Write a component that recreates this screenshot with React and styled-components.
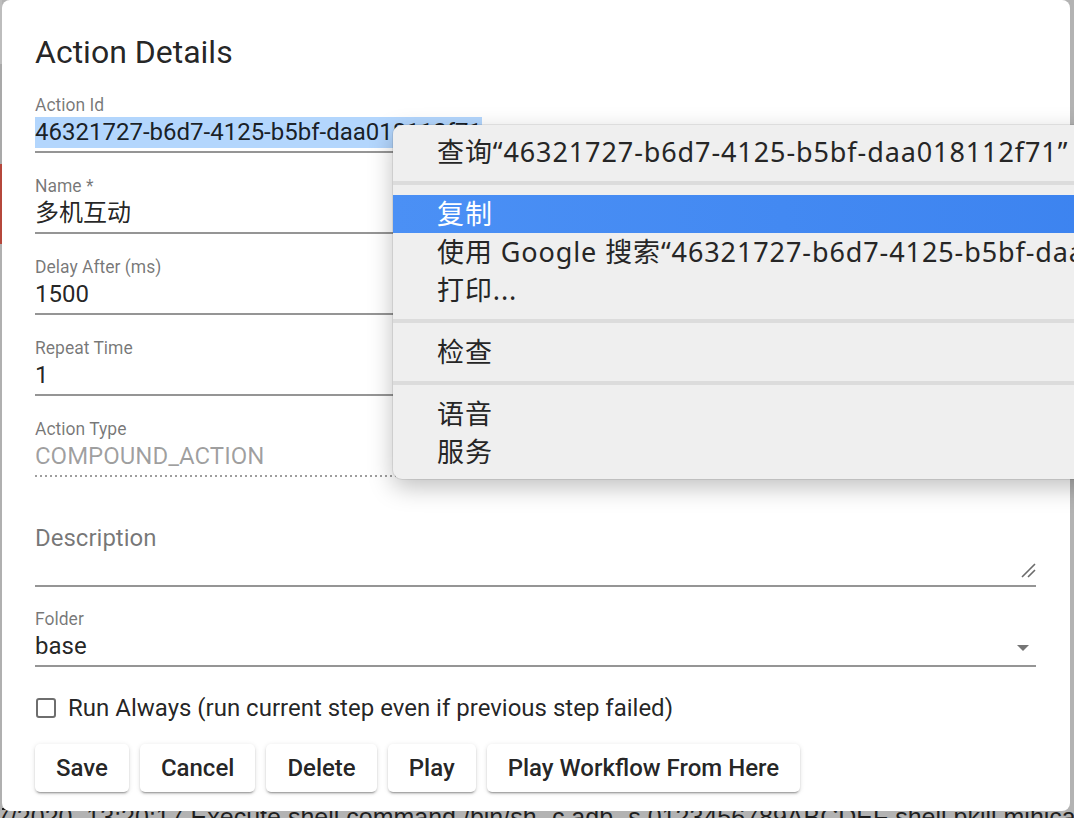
import React from "react";
import styled, { createGlobalStyle } from "styled-components";

const GlobalStyle = createGlobalStyle`
  html, body {
    margin: 0;
    padding: 0;
    overflow: hidden;
    background: #b3b3b3;
  }
  * { box-sizing: border-box; }
`;

const FONT = `"Roboto", "Noto Sans CJK SC", sans-serif`;

const fields = [
  { label: "Action Id", value: "46321727-b6d7-4125-b5bf-daa018112f71", selected: true },
  { label: "Name *", value: "多机互动" },
  { label: "Delay After (ms)", value: "1500" },
  { label: "Repeat Time", value: "1" },
  { label: "Action Type", value: "COMPOUND_ACTION", disabled: true },
];

const buttons = ["Save", "Cancel", "Delete", "Play", "Play Workflow From Here"];

const menuGroups = [
  [{ text: "查询“46321727-b6d7-4125-b5bf-daa018112f71”" }],
  [
    { text: "复制", active: true },
    { text: "使用 Google 搜索“46321727-b6d7-4125-b5bf-daa018112f71”" },
    { text: "打印..." },
  ],
  [{ text: "检查" }],
  [{ text: "语音" }, { text: "服务" }],
];

const App = () => {
  return (
    <Screen>
      <GlobalStyle />
      <TopRow>
        <LeftEdge>
          <EdgeBlock $h={64} $color="#bdbdbd" />
          <EdgeBlock $h={100} $color="#a9a9a9" />
          <EdgeBlock $h={80} $color="#b5473b" />
          <EdgeBlock $h={567} $color="#b0b0b0" />
        </LeftEdge>

        <Dialog>
          <Title>Action Details</Title>

          {fields.map((f) => (
            <Field key={f.label} $disabled={f.disabled}>
              <Label>{f.label}</Label>
              <Value $disabled={f.disabled}>
                {f.selected ? <Selected>{f.value}</Selected> : f.value}
              </Value>
            </Field>
          ))}

          <TextAreaField>
            <Placeholder>Description</Placeholder>
            <ResizeHandle width="16" height="16" viewBox="0 0 16 16">
              <path d="M2 15 L15 2 M8 15 L15 8" stroke="#6b6b6b" strokeWidth="1.6" fill="none" />
            </ResizeHandle>
          </TextAreaField>

          <Field>
            <Label>Folder</Label>
            <SelectValue>
              base
              <Arrow />
            </SelectValue>
          </Field>

          <CheckRow>
            <CheckBox />
            <CheckLabel>Run Always (run current step even if previous step failed)</CheckLabel>
          </CheckRow>

          <ButtonRow>
            {buttons.map((b) => (
              <Button key={b}>{b}</Button>
            ))}
          </ButtonRow>

          <ContextMenu>
            {menuGroups.map((group, gi) => (
              <React.Fragment key={gi}>
                {gi > 0 && <Separator />}
                {group.map((item) => (
                  <MenuItem key={item.text} $active={item.active}>
                    {item.text}
                  </MenuItem>
                ))}
              </React.Fragment>
            ))}
          </ContextMenu>
        </Dialog>
      </TopRow>
      <LogLine>7/2020, 13:20:17 Execute shell command /bin/sh -c adb -s 0123456789ABCDEF shell pkill mihican</LogLine>
    </Screen>
  );
};

const Screen = styled.div`
  width: 1074px;
  height: 818px;
  overflow: hidden;
  background: #b3b3b3;
  display: flex;
  flex-direction: column;
  font-family: ${FONT};
`;

const TopRow = styled.div`
  position: relative;
  z-index: 1;
  display: flex;
  height: 811px;
  flex-shrink: 0;
`;

const LeftEdge = styled.div`
  width: 2px;
  display: flex;
  flex-direction: column;
`;

const EdgeBlock = styled.div`
  height: ${(p) => p.$h}px;
  background: ${(p) => p.$color};
`;

const Dialog = styled.div`
  position: relative;
  width: 1068px;
  height: 811px;
  background: #ffffff;
  border-radius: 8px;
  padding: 34px 34px 0 33px;
  display: flex;
  flex-direction: column;
`;

const Title = styled.div`
  font-size: 32px;
  line-height: 36px;
  font-weight: 400;
  color: rgba(0, 0, 0, 0.87);
  margin-bottom: 25px;
`;

const Field = styled.div`
  display: flex;
  flex-direction: column;
  padding-bottom: 4px;
  margin-bottom: 23px;
  ${(p) =>
    p.$disabled
      ? `background: linear-gradient(to right, #9e9e9e 40%, transparent 0) repeat-x left bottom / 5px 2px;
         padding-bottom: 6px;`
      : `border-bottom: 2px solid #959595;`}
`;

const Label = styled.div`
  font-size: 17.5px;
  line-height: 20px;
  color: rgba(0, 0, 0, 0.54);
  margin-bottom: 2px;
`;

const Value = styled.div`
  font-size: 24px;
  line-height: 30px;
  color: ${(p) => (p.$disabled ? "rgba(0,0,0,0.38)" : "rgba(0,0,0,0.87)")};
  white-space: nowrap;
`;

const Selected = styled.span`
  background: #b3d6fd;
  padding: 1px 0 2px;
`;

const TextAreaField = styled.div`
  position: relative;
  height: 87px;
  padding-top: 23px;
  border-bottom: 2px solid #959595;
  margin-bottom: 22px;
`;

const Placeholder = styled.div`
  font-size: 24px;
  line-height: 30px;
  color: rgba(0, 0, 0, 0.54);
`;

const ResizeHandle = styled.svg`
  position: absolute;
  right: 0;
  bottom: 7px;
`;

const SelectValue = styled.div`
  display: flex;
  align-items: center;
  justify-content: space-between;
  font-size: 24px;
  line-height: 30px;
  color: rgba(0, 0, 0, 0.87);
  padding-right: 7px;
`;

const Arrow = styled.span`
  width: 0;
  height: 0;
  border-left: 6px solid transparent;
  border-right: 6px solid transparent;
  border-top: 6px solid #757575;
  margin-top: 3px;
`;

const CheckRow = styled.div`
  display: flex;
  align-items: center;
  height: 32px;
  margin-top: 2px;
  margin-bottom: 20px;
`;

const CheckBox = styled.span`
  width: 20px;
  height: 20px;
  border: 2px solid #6e6e6e;
  border-radius: 3px;
  margin-right: 12px;
  margin-left: 1px;
`;

const CheckLabel = styled.span`
  font-size: 24px;
  color: rgba(0, 0, 0, 0.87);
`;

const ButtonRow = styled.div`
  display: flex;
  gap: 11px;
`;

const Button = styled.button`
  height: 48px;
  padding: 0 21px;
  border: none;
  border-radius: 5px;
  background: #ffffff;
  font-family: ${FONT};
  font-size: 24px;
  font-weight: 500;
  color: rgba(0, 0, 0, 0.87);
  box-shadow: 0 3px 1px -2px rgba(0, 0, 0, 0.2), 0 2px 2px 0 rgba(0, 0, 0, 0.14),
    0 1px 5px 0 rgba(0, 0, 0, 0.12);
`;

const ContextMenu = styled.div`
  position: absolute;
  left: 391px;
  top: 125px;
  width: 780px;
  padding: 8px 0;
  background: #efefef;
  border-radius: 9px;
  box-shadow: 0 8px 24px rgba(0, 0, 0, 0.25), 0 0 0 1px rgba(0, 0, 0, 0.08);
  font-family: "Noto Sans", "Noto Sans CJK SC", sans-serif;
`;

const MenuItem = styled.div`
  height: 38px;
  line-height: 38px;
  padding-left: 44px;
  font-size: 27px;
  letter-spacing: 0.9px;
  white-space: nowrap;
  color: ${(p) => (p.$active ? "#ffffff" : "#262626")};
  background: ${(p) => (p.$active ? "linear-gradient(to right, #4b90f5, #3b82ef)" : "transparent")};
`;

const Separator = styled.div`
  height: 4px;
  margin: 10px 0;
  background: #dcdcdc;
`;

const LogLine = styled.div`
  font-family: "Liberation Sans", sans-serif;
  font-size: 25px;
  line-height: 30px;
  margin-top: -9px;
  margin-left: -4px;
  white-space: nowrap;
  color: #1e1e1e;
`;

export default App;
